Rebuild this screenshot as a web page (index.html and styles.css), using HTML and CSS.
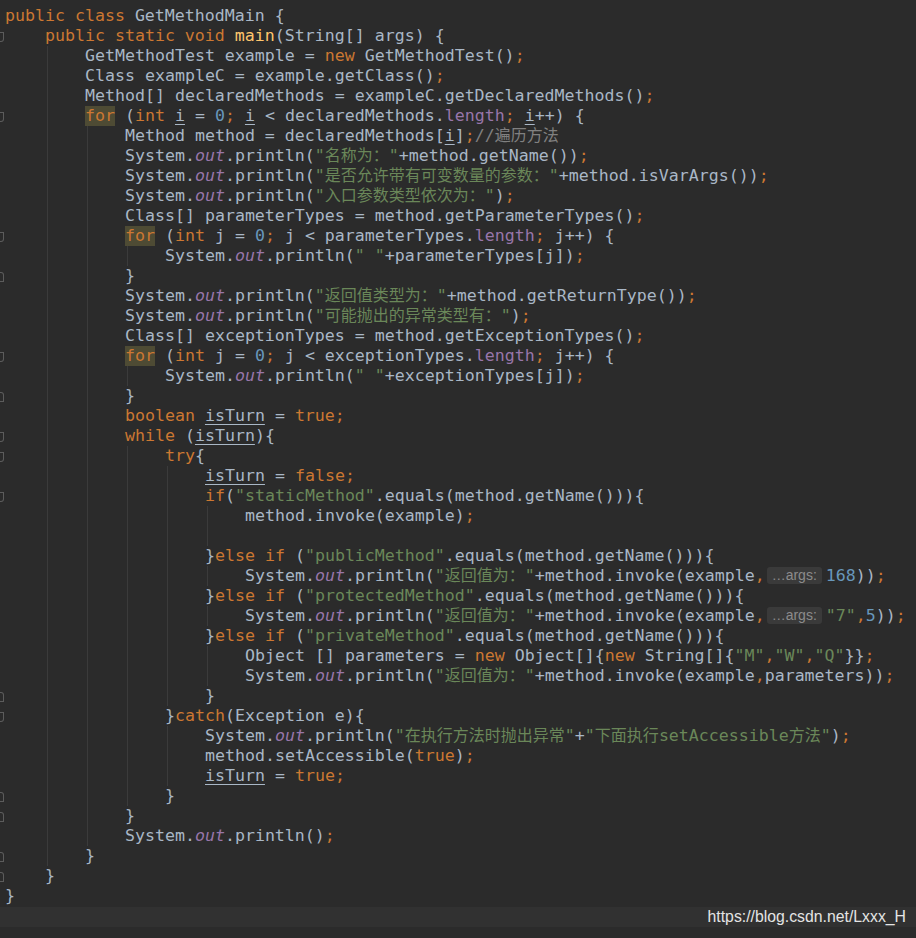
FILE: index.html
```html
<html lang="zh">
    <head>
        <title>GetMethodMain.java</title>
        <meta charset="UTF-8" />
        <link rel="stylesheet" href="styles.css">
    </head>

    <body>
        <div class="editor">
            <div class="line"><span class="gut"></span><span class="code"><span class="k">public class</span> GetMethodMain {</span></div>
            <div class="line"><span class="gut op"></span><span class="ind"></span><span class="code"><span class="k">public static void</span> <span class="m">main</span>(String[] args) {</span></div>
            <div class="line"><span class="gut"></span><span class="ind"></span><span class="ind g"></span><span class="code">GetMethodTest example = <span class="k">new</span> GetMethodTest()<span class="k">;</span></span></div>
            <div class="line"><span class="gut"></span><span class="ind"></span><span class="ind g"></span><span class="code">Class exampleC = example.getClass()<span class="k">;</span></span></div>
            <div class="line"><span class="gut"></span><span class="ind"></span><span class="ind g"></span><span class="code">Method[] declaredMethods = exampleC.getDeclaredMethods()<span class="k">;</span></span></div>
            <div class="line"><span class="gut op"></span><span class="ind"></span><span class="ind g"></span><span class="code"><span class="k hl">for</span> (<span class="k">int</span> <span class="u">i</span> = <span class="n">0</span><span class="k">;</span> <span class="u">i</span> &lt; declaredMethods.<span class="f">length</span><span class="k">;</span> <span class="u">i</span>++) {</span></div>
            <div class="line"><span class="gut"></span><span class="ind"></span><span class="ind g"></span><span class="ind g"></span><span class="code">Method method = declaredMethods[<span class="u">i</span>]<span class="k">;</span><span class="c">//<span class="zh">遍历方法</span></span></span></div>
            <div class="line"><span class="gut"></span><span class="ind"></span><span class="ind g"></span><span class="ind g"></span><span class="code">System.<span class="fi">out</span>.println(<span class="s">"<span class="zh">名称为：</span>"</span>+method.getName())<span class="k">;</span></span></div>
            <div class="line"><span class="gut"></span><span class="ind"></span><span class="ind g"></span><span class="ind g"></span><span class="code">System.<span class="fi">out</span>.println(<span class="s">"<span class="zh">是否允许带有可变数量的参数：</span>"</span>+method.isVarArgs())<span class="k">;</span></span></div>
            <div class="line"><span class="gut"></span><span class="ind"></span><span class="ind g"></span><span class="ind g"></span><span class="code">System.<span class="fi">out</span>.println(<span class="s">"<span class="zh">入口参数类型依次为：</span>"</span>)<span class="k">;</span></span></div>
            <div class="line"><span class="gut"></span><span class="ind"></span><span class="ind g"></span><span class="ind g"></span><span class="code">Class[] parameterTypes = method.getParameterTypes()<span class="k">;</span></span></div>
            <div class="line"><span class="gut op"></span><span class="ind"></span><span class="ind g"></span><span class="ind g"></span><span class="code"><span class="k hl">for</span> (<span class="k">int</span> j = <span class="n">0</span><span class="k">;</span> j &lt; parameterTypes.<span class="f">length</span><span class="k">;</span> j++) {</span></div>
            <div class="line"><span class="gut"></span><span class="ind"></span><span class="ind g"></span><span class="ind g"></span><span class="ind g"></span><span class="code">System.<span class="fi">out</span>.println(<span class="s">" "</span>+parameterTypes[j])<span class="k">;</span></span></div>
            <div class="line"><span class="gut cl"></span><span class="ind"></span><span class="ind g"></span><span class="ind g"></span><span class="code">}</span></div>
            <div class="line"><span class="gut"></span><span class="ind"></span><span class="ind g"></span><span class="ind g"></span><span class="code">System.<span class="fi">out</span>.println(<span class="s">"<span class="zh">返回值类型为：</span>"</span>+method.getReturnType())<span class="k">;</span></span></div>
            <div class="line"><span class="gut"></span><span class="ind"></span><span class="ind g"></span><span class="ind g"></span><span class="code">System.<span class="fi">out</span>.println(<span class="s">"<span class="zh">可能抛出的异常类型有：</span>"</span>)<span class="k">;</span></span></div>
            <div class="line"><span class="gut"></span><span class="ind"></span><span class="ind g"></span><span class="ind g"></span><span class="code">Class[] exceptionTypes = method.getExceptionTypes()<span class="k">;</span></span></div>
            <div class="line"><span class="gut op"></span><span class="ind"></span><span class="ind g"></span><span class="ind g"></span><span class="code"><span class="k hl">for</span> (<span class="k">int</span> j = <span class="n">0</span><span class="k">;</span> j &lt; exceptionTypes.<span class="f">length</span><span class="k">;</span> j++) {</span></div>
            <div class="line"><span class="gut"></span><span class="ind"></span><span class="ind g"></span><span class="ind g"></span><span class="ind g"></span><span class="code">System.<span class="fi">out</span>.println(<span class="s">" "</span>+exceptionTypes[j])<span class="k">;</span></span></div>
            <div class="line"><span class="gut cl"></span><span class="ind"></span><span class="ind g"></span><span class="ind g"></span><span class="code">}</span></div>
            <div class="line"><span class="gut"></span><span class="ind"></span><span class="ind g"></span><span class="ind g"></span><span class="code"><span class="k">boolean</span> <span class="u">isTurn</span> = <span class="k">true;</span></span></div>
            <div class="line"><span class="gut op"></span><span class="ind"></span><span class="ind g"></span><span class="ind g"></span><span class="code"><span class="k">while</span> (<span class="u">isTurn</span>){</span></div>
            <div class="line"><span class="gut op"></span><span class="ind"></span><span class="ind g"></span><span class="ind g"></span><span class="ind g"></span><span class="code"><span class="k">try</span>{</span></div>
            <div class="line"><span class="gut"></span><span class="ind"></span><span class="ind g"></span><span class="ind g"></span><span class="ind g"></span><span class="ind g"></span><span class="code"><span class="u">isTurn</span> = <span class="k">false;</span></span></div>
            <div class="line"><span class="gut op"></span><span class="ind"></span><span class="ind g"></span><span class="ind g"></span><span class="ind g"></span><span class="ind g"></span><span class="code"><span class="k">if</span>(<span class="s">"staticMethod"</span>.equals(method.getName())){</span></div>
            <div class="line"><span class="gut"></span><span class="ind"></span><span class="ind g"></span><span class="ind g"></span><span class="ind g"></span><span class="ind g"></span><span class="ind g"></span><span class="code">method.invoke(example)<span class="k">;</span></span></div>
            <div class="line"><span class="gut"></span><span class="ind"></span><span class="ind g"></span><span class="ind g"></span><span class="ind g"></span><span class="ind g"></span><span class="ind g"></span><span class="code"></span></div>
            <div class="line"><span class="gut"></span><span class="ind"></span><span class="ind g"></span><span class="ind g"></span><span class="ind g"></span><span class="ind g"></span><span class="code">}<span class="k">else if</span> (<span class="s">"publicMethod"</span>.equals(method.getName())){</span></div>
            <div class="line"><span class="gut"></span><span class="ind"></span><span class="ind g"></span><span class="ind g"></span><span class="ind g"></span><span class="ind g"></span><span class="ind g"></span><span class="code">System.<span class="fi">out</span>.println(<span class="s">"<span class="zh">返回值为：</span>"</span>+method.invoke(example<span class="k">,</span><span class="hint">…args:</span><span class="n">168</span>))<span class="k">;</span></span></div>
            <div class="line"><span class="gut"></span><span class="ind"></span><span class="ind g"></span><span class="ind g"></span><span class="ind g"></span><span class="ind g"></span><span class="code">}<span class="k">else if</span> (<span class="s">"protectedMethod"</span>.equals(method.getName())){</span></div>
            <div class="line"><span class="gut"></span><span class="ind"></span><span class="ind g"></span><span class="ind g"></span><span class="ind g"></span><span class="ind g"></span><span class="ind g"></span><span class="code">System.<span class="fi">out</span>.println(<span class="s">"<span class="zh">返回值为：</span>"</span>+method.invoke(example<span class="k">,</span><span class="hint">…args:</span><span class="s">"7"</span><span class="k">,</span><span class="n">5</span>))<span class="k">;</span></span></div>
            <div class="line"><span class="gut"></span><span class="ind"></span><span class="ind g"></span><span class="ind g"></span><span class="ind g"></span><span class="ind g"></span><span class="code">}<span class="k">else if</span> (<span class="s">"privateMethod"</span>.equals(method.getName())){</span></div>
            <div class="line"><span class="gut"></span><span class="ind"></span><span class="ind g"></span><span class="ind g"></span><span class="ind g"></span><span class="ind g"></span><span class="ind g"></span><span class="code">Object [] parameters = <span class="k">new</span> Object[]{<span class="k">new</span> String[]{<span class="s">"M"</span><span class="k">,</span><span class="s">"W"</span><span class="k">,</span><span class="s">"Q"</span>}}<span class="k">;</span></span></div>
            <div class="line"><span class="gut"></span><span class="ind"></span><span class="ind g"></span><span class="ind g"></span><span class="ind g"></span><span class="ind g"></span><span class="ind g"></span><span class="code">System.<span class="fi">out</span>.println(<span class="s">"<span class="zh">返回值为：</span>"</span>+method.invoke(example<span class="k">,</span>parameters))<span class="k">;</span></span></div>
            <div class="line"><span class="gut cl"></span><span class="ind"></span><span class="ind g"></span><span class="ind g"></span><span class="ind g"></span><span class="ind g"></span><span class="code">}</span></div>
            <div class="line"><span class="gut op"></span><span class="ind"></span><span class="ind g"></span><span class="ind g"></span><span class="ind g"></span><span class="code">}<span class="k">catch</span>(Exception e){</span></div>
            <div class="line"><span class="gut"></span><span class="ind"></span><span class="ind g"></span><span class="ind g"></span><span class="ind g"></span><span class="ind g"></span><span class="code">System.<span class="fi">out</span>.println(<span class="s">"<span class="zh">在执行方法时抛出异常</span>"</span>+<span class="s">"<span class="zh">下面执行</span>setAccessible<span class="zh">方法</span>"</span>)<span class="k">;</span></span></div>
            <div class="line"><span class="gut"></span><span class="ind"></span><span class="ind g"></span><span class="ind g"></span><span class="ind g"></span><span class="ind g"></span><span class="code">method.setAccessible(<span class="k">true</span>)<span class="k">;</span></span></div>
            <div class="line"><span class="gut"></span><span class="ind"></span><span class="ind g"></span><span class="ind g"></span><span class="ind g"></span><span class="ind g"></span><span class="code"><span class="u">isTurn</span> = <span class="k">true;</span></span></div>
            <div class="line"><span class="gut cl"></span><span class="ind"></span><span class="ind g"></span><span class="ind g"></span><span class="ind g"></span><span class="code">}</span></div>
            <div class="line"><span class="gut cl"></span><span class="ind"></span><span class="ind g"></span><span class="ind g"></span><span class="code">}</span></div>
            <div class="line"><span class="gut"></span><span class="ind"></span><span class="ind g"></span><span class="ind g"></span><span class="code">System.<span class="fi">out</span>.println()<span class="k">;</span></span></div>
            <div class="line"><span class="gut cl"></span><span class="ind"></span><span class="ind g"></span><span class="code">}</span></div>
            <div class="line"><span class="gut cl"></span><span class="ind"></span><span class="code">}</span></div>
            <div class="line"><span class="gut"></span><span class="code">}</span></div>
        </div>

        <div class="watermark">https://blog.csdn.net/Lxxx_H</div>
    </body>
</html>
```

FILE: styles.css
```css
html {
    background: #2b2b2b;
}

body {
    margin: 0;
    width: 916px;
    height: 938px;
    overflow: hidden;
}

.editor {
    padding-top: 6px;
    font-family: "DejaVu Sans Mono", "Noto Sans CJK SC", monospace;
    font-size: 16.6px;
    color: #a9b7c6;
}

.line {
    display: flex;
    height: 20px;
    line-height: 20px;
}

.code {
    white-space: pre;
}

/* gutter with fold markers */
.gut {
    flex: none;
    width: 5px;
    overflow: hidden;
}

.gut.op::after,
.gut.cl::after {
    content: "";
    display: block;
    width: 3px;
    height: 8px;
    margin-top: 6px;
    border: 1px solid #5c5c5c;
    border-left: none;
}

.gut.op::after {
    border-radius: 0 0 3px 0;
}

.gut.cl::after {
    border-radius: 0 3px 0 0;
}

/* indentation with guides */
.ind {
    flex: none;
    width: 40px;
    height: 20px;
}

.ind.g {
    background: linear-gradient(#3b3b3b, #3b3b3b) 2px 0 / 1px 100% no-repeat;
}

.k {
    color: #cc7832;
}

.hl {
    background: #4e4b34;
    display: inline-block;
    height: 20px;
}

.s {
    color: #6a8759;
}

.n {
    color: #6897bb;
}

.f {
    color: #9876aa;
}

.fi {
    color: #9876aa;
    font-style: italic;
}

.m {
    color: #ffc66d;
}

.c {
    color: #808080;
}

.u {
    text-decoration: underline;
    text-underline-offset: 3px;
}

.zh {
    font-family: "Noto Sans CJK SC", sans-serif;
    font-size: 16px;
    line-height: 16px;
}

.hint {
    display: inline-block;
    margin: 0 4px 0 2px;
    padding: 0 5px;
    height: 17px;
    line-height: 17px;
    vertical-align: 1px;
    border-radius: 3px;
    background: #3a3a3a;
    color: #8c8c8c;
    font-family: "Liberation Sans", sans-serif;
    font-size: 14px;
}

.watermark {
    margin-top: 1px;
    height: 20px;
    padding-right: 10px;
    background: #313131;
    color: #e4e4e4;
    font-family: "Liberation Sans", Arial, sans-serif;
    font-size: 15.8px;
    line-height: 20px;
    text-align: right;
}
```
